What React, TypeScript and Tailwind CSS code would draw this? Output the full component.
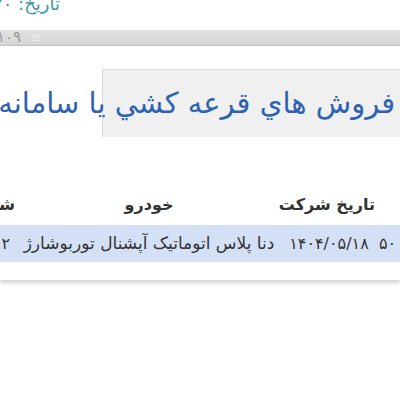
export default function App() {
  return (
    <div dir="rtl" className="w-[400px] h-[400px] overflow-hidden bg-white font-['DejaVu_Sans',sans-serif]">
      {/* top date line */}
      <div className="flex h-[30px] pr-[340px]">
        <span className="-mt-[7px] whitespace-nowrap text-[18px] leading-[22px] text-[#3f98a8]">
          تاریخ: ۱۴۰۴/۰۵/۲۰
        </span>
      </div>

      {/* toolbar strip */}
      <div className="flex h-[16px] items-center gap-[10px] bg-gradient-to-b from-[#e2e2e2] to-[#d5d5d5] border-b border-[#c4c4c4] pr-[358px]">
        <span className="text-[#ececec] text-[13px] leading-none">≡</span>
        <span className="whitespace-nowrap text-[15px] leading-none text-[#9a9a9a]">۱۰۹</span>
      </div>

      <div className="shadow-[0_3px_4px_rgba(0,0,0,0.18)] pb-[18px]">
        {/* title */}
        <div className="flex pt-[23px]">
          <div className="flex h-[68px] w-[298px] items-center border-t border-l border-[#dcdcdc] bg-[#f0f0f0] pr-[5px]">
            <span className="whitespace-nowrap text-[29px] text-[#2e62b2]">
              فروش هاي قرعه كشي يا سامانه يكپارچه
            </span>
          </div>
        </div>

        {/* table */}
        <div className="mt-[53px] flex h-[30px] items-center text-[16px] font-bold text-[#333]">
          <div className="w-[25px] shrink-0" />
          <div className="w-[92px] shrink-0 text-center whitespace-nowrap">تاریخ شرکت</div>
          <div className="w-[268px] shrink-0 text-center whitespace-nowrap">خودرو</div>
          <div className="w-[60px] shrink-0 whitespace-nowrap">شماره</div>
        </div>
        <div className="mt-[5px] flex h-[37px] items-center bg-[#d4e0f6] text-[#333]">
          <div className="w-[25px] shrink-0 text-center text-[16px] whitespace-nowrap">۵۰</div>
          <div className="w-[92px] shrink-0 text-center text-[16px] whitespace-nowrap">۱۴۰۴/۰۵/۱۸</div>
          <div className="w-[268px] shrink-0 text-center text-[17px] whitespace-nowrap">دنا پلاس اتوماتیک آپشنال توربوشارژ</div>
          <div className="w-[60px] shrink-0 pr-[5px] text-[16px] whitespace-nowrap">۱۲</div>
        </div>
      </div>
    </div>
  );
}
